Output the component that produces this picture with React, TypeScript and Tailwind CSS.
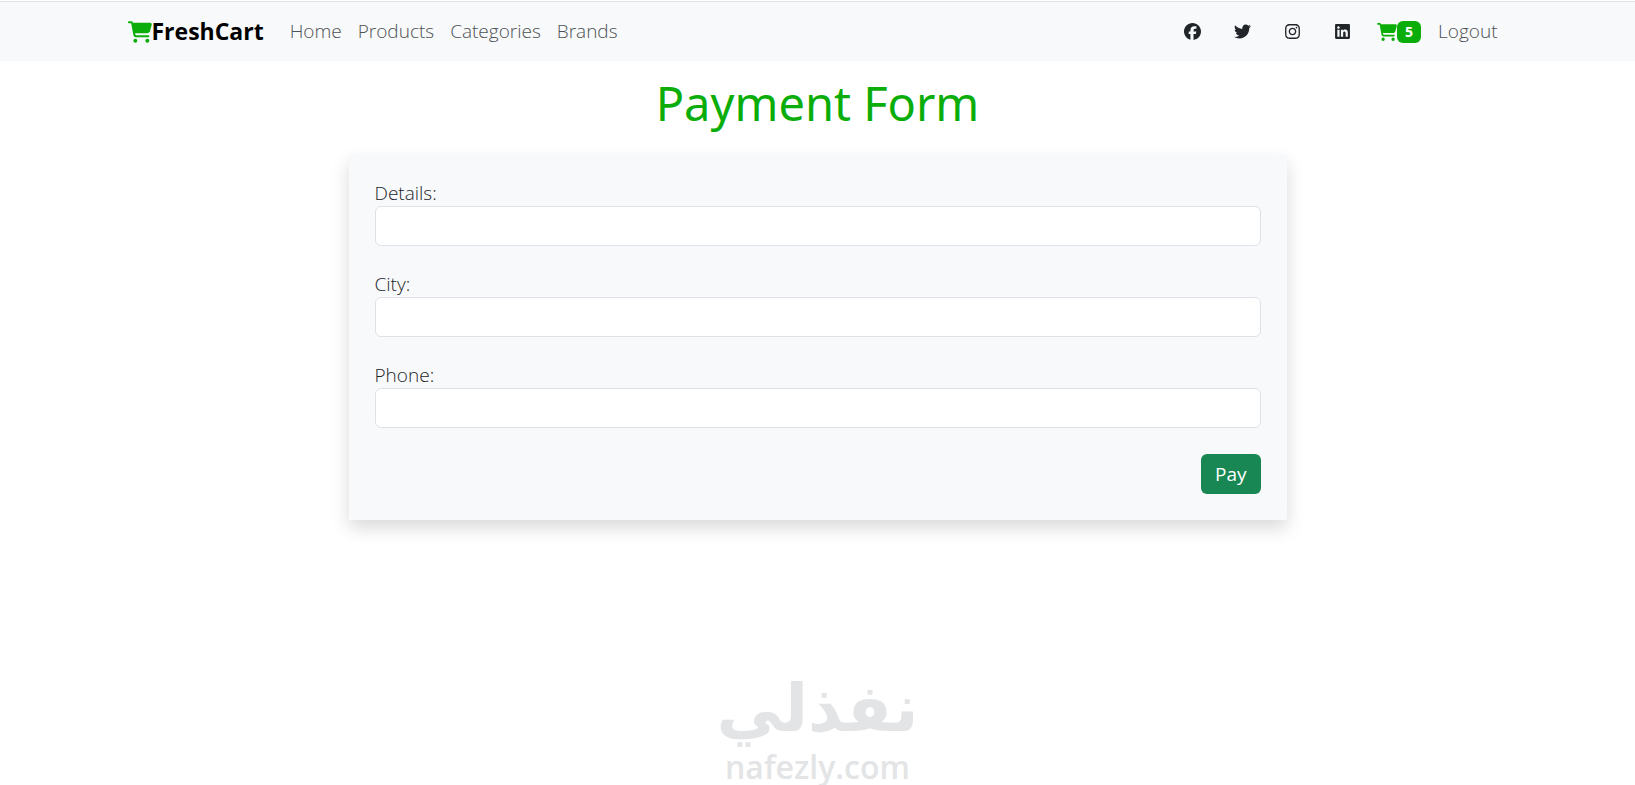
import type { IconType } from "react-icons";
import {
  FaCartShopping,
  FaFacebook,
  FaInstagram,
  FaLinkedin,
  FaTwitter,
} from "react-icons/fa6";

const links = ["Home", "Products", "Categories", "Brands"];

const socials: { label: string; icon: IconType }[] = [
  { label: "Facebook", icon: FaFacebook },
  { label: "Twitter", icon: FaTwitter },
  { label: "Instagram", icon: FaInstagram },
  { label: "LinkedIn", icon: FaLinkedin },
];

const fields = [
  { id: "details", label: "Details:", type: "text" },
  { id: "city", label: "City:", type: "text" },
  { id: "phone", label: "Phone:", type: "tel" },
];

export default function App() {
  return (
    <div className="flex min-h-screen flex-col bg-white pt-px font-['Open_Sans','Noto_Sans',sans-serif] text-[19px] text-[#212529]">
      <Navbar />
      <main className="px-4 pt-3">
        <h1 className="text-center font-['Noto_Sans',sans-serif] text-[47px] leading-[60px] font-normal text-[#0aad0a]">
          Payment Form
        </h1>
        <PaymentForm />
      </main>
      <Watermark />
    </div>
  );
}

function Navbar() {
  return (
    <nav className="border-t border-[#dee2e6] bg-[#f8f9fa]">
      <div className="mx-auto flex h-[59px] max-w-[1380px] items-center justify-between">
        <div className="flex items-center">
          <a href="#" className="mr-[26px] flex items-center text-[23px] font-bold text-black">
            <FaCartShopping className="h-6 w-6 text-[#0aad0a]" aria-hidden="true" />
            FreshCart
          </a>
          <div className="flex gap-4">
            {links.map((link) => (
              <a key={link} href="#" className="font-light text-[#4d5154]">
                {link}
              </a>
            ))}
          </div>
        </div>

        <div className="flex items-center pr-[10px]">
          <div className="flex gap-[33px] pr-[26px]">
            {socials.map(({ label, icon: Icon }) => (
              <a key={label} href="#" aria-label={label}>
                <Icon className="h-[17px] w-[17px]" />
              </a>
            ))}
          </div>
          <a href="#" aria-label="Cart" className="flex items-center text-[#0aad0a]">
            <FaCartShopping className="h-[18px] w-5" />
            <span className="flex h-[22px] w-6 items-center justify-center rounded-md bg-[#0aad0a] text-[14px] font-bold text-white">
              5
            </span>
          </a>
          <a href="#" className="ml-[17px] font-light text-[#4d5154]">
            Logout
          </a>
        </div>
      </div>
    </nav>
  );
}

function PaymentForm() {
  return (
    <form
      className="mx-auto mt-[22px] max-w-[938px] bg-[#f8f9fa] p-[26px] shadow-[0_8px_17px_rgba(0,0,0,0.15)]"
      onSubmit={(event) => event.preventDefault()}
    >
      {fields.map((field) => (
        <div key={field.id} className="mb-[26px]">
          <label htmlFor={field.id} className="block leading-[25px] font-light">
            {field.label}
          </label>
          <input
            id={field.id}
            type={field.type}
            className="block h-10 w-full rounded-md border border-[#dee2e6] bg-white px-3 outline-none focus:border-[#86b7fe]"
          />
        </div>
      ))}
      <div className="flex justify-end">
        <button type="submit" className="h-10 rounded-md bg-[#198754] px-[14px] text-white">
          Pay
        </button>
      </div>
    </form>
  );
}

function Watermark() {
  return (
    <footer className="mt-auto flex flex-col items-center text-[#e3e4e6]">
      <p lang="ar" dir="rtl" className="font-['DejaVu_Sans',sans-serif] text-[66px] leading-[80px] font-bold">
        نفذلي
      </p>
      <p className="text-[32px] leading-9 font-semibold">nafezly.com</p>
    </footer>
  );
}
